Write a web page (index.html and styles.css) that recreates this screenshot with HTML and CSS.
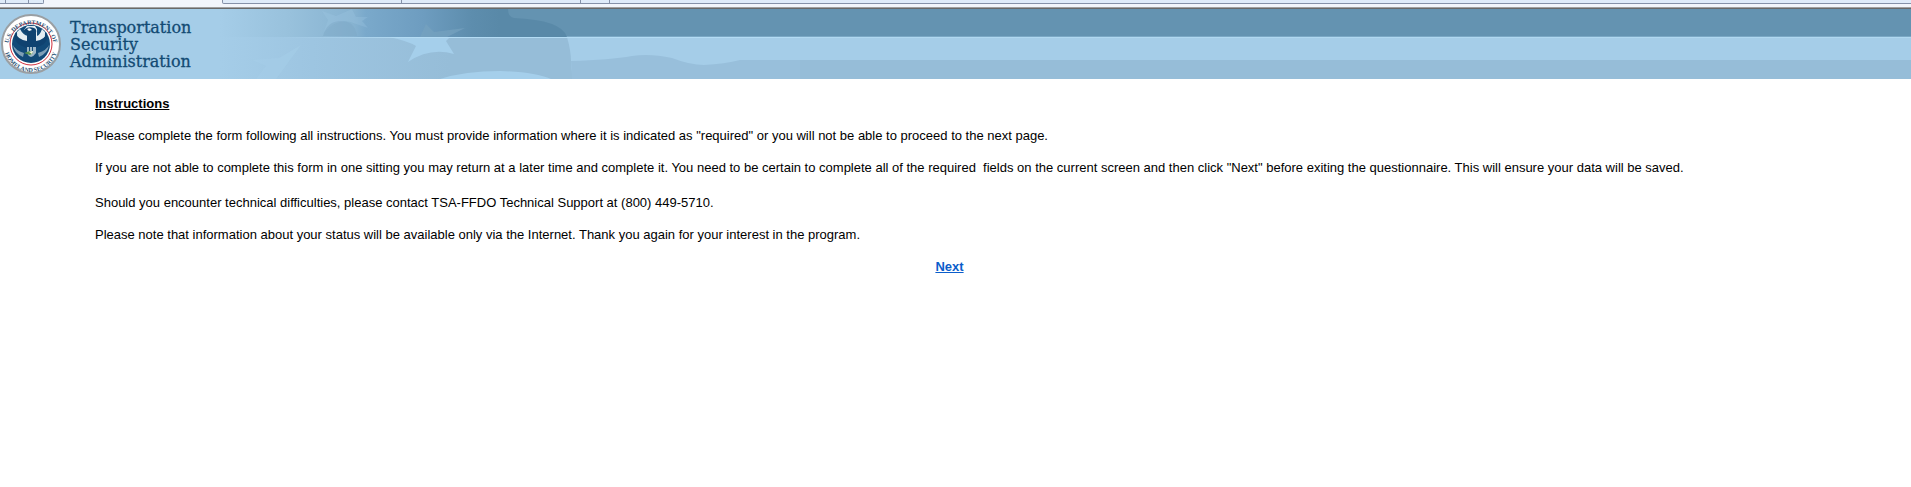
FILE: index.html
```html
<!DOCTYPE html>
<html lang="en">
<head>
    <meta charset="UTF-8">
    <meta name="viewport" content="width=device-width, initial-scale=1.0">
    <title>Transportation Security Administration</title>
    <link rel="stylesheet" href="styles.css">
</head>
<body>
<div class="tab-strip">
    <span class="tab tab-tiny"></span>
    <span class="tab tab-small"></span>
    <span class="tab tab-end"></span>
    <span class="tab-active"></span>
    <span class="tab tab-start"></span>
    <span class="tab tab-wide"></span>
    <span class="tab tab-new"></span>
    <span class="tab-rest"></span>
</div>

<header class="banner">
    <!-- flag artwork behind the logo -->
    <svg class="flag" width="800" height="70" viewBox="0 0 800 70" aria-hidden="true">
        <defs>
            <linearGradient id="top" gradientUnits="userSpaceOnUse" x1="220" y1="0" x2="500" y2="0">
                <stop offset="0" stop-color="#a5cde8"/>
                <stop offset="0.25" stop-color="#98c1dc"/>
                <stop offset="0.48" stop-color="#86b2d0"/>
                <stop offset="0.52" stop-color="#7aa9cb"/>
                <stop offset="0.72" stop-color="#6e9dc0"/>
                <stop offset="0.9" stop-color="#5d8dad"/>
                <stop offset="1" stop-color="#5989a8"/>
            </linearGradient>
            <linearGradient id="low" gradientUnits="userSpaceOnUse" x1="220" y1="0" x2="450" y2="0">
                <stop offset="0" stop-color="#a5cde8"/>
                <stop offset="0.4" stop-color="#9dc5e1"/>
                <stop offset="1" stop-color="#96bdd8"/>
            </linearGradient>
            <linearGradient id="line" gradientUnits="userSpaceOnUse" x1="280" y1="0" x2="420" y2="0">
                <stop offset="0" stop-color="#b4dcf4" stop-opacity="0"/>
                <stop offset="1" stop-color="#b4dcf4"/>
            </linearGradient>
        </defs>
        <path fill="#a5cde8" d="M0 0h230v70H0zM560 29h180v41H560z"/>
        <path fill="url(#top)" d="M220 0H508Q508 8 514 9Q562 11 567 28H220z"/>
        <path fill="url(#low)" d="M220 28H567Q571 42 571 52Q571 62 574 70H220z"/>
        <path fill="#98bfdb" d="M571 52Q610 51 632 47Q650 44 672 49Q690 56 704 56Q725 55 740 51H800V70H572z"/>
        <path fill="#a5cfeb" d="M440 70Q465 62 500 62Q535 63 551 70z"/>
        <path fill="#a5cde8" opacity=".25" d="M322 2l14 5 16-7 4 8h12l-6 4 6 7-12-4q-16-8-32 8l4-12z"/>
        <path fill="#a5cde8" opacity=".6" d="M301 36l-22 13-27 2 14 6-10 13h20z"/>
        <path fill="#7ba5c3" opacity=".4" d="M323 27q4-15 18-15t16 15z"/>
        <path fill="#76a2bf" opacity=".7" d="M426 15l8 8 31-4-18 9h-27z"/>
        <path fill="#a5cfeb" d="M389 28Q408 32 416 37L408 53Q430 38 454 45L446 32 450 28z"/>
        <path fill="url(#line)" d="M280 28h520v1H280z"/>
    </svg>
    <div class="logo">
        <svg class="seal" width="62" height="62" viewBox="0 0 62 62" role="img" aria-label="Homeland Security seal">
            <defs>
                <path id="arc-top" d="M9 41A23 23 0 1 1 53 41"/>
                <path id="arc-bottom" d="M4 32A27 27 0 0 0 58 32"/>
            </defs>
            <circle cx="31" cy="31" r="29" fill="#fff" stroke="#9a9fa3" stroke-width="2"/>
            <circle cx="31" cy="31" r="21" fill="#fff" stroke="#d0303e" stroke-width="1"/>
            <circle cx="31" cy="31" r="19" fill="#124a78"/>
            <!-- sky behind the wings -->
            <path fill="#e4edf3" d="M20 16Q23 22 28 23V19L24 17 27 13H35L37 16V23Q40 22 42 16L45 19Q46 29 38 33V31H25V33Q16 29 17 19z"/>
            <path fill="#0f4270" d="M15 19Q18 27 27 28V20L23 19 25 16Q29 13 34 15Q37 16 36 20V28Q45 27 47 19Q49 30 40 33L36 35H26L22 33Q13 30 15 19z"/>
            <path fill="#7f9fb6" d="M13 32q2 5 11 8l-1 4Q14 40 13 32zM49 32q-2 5-11 8l1 4q9-4 10-12z"/>
            <path fill="#fff" d="M27 16q3-2 5 1l-3 1z"/>
            <path fill="#9fb7c8" d="M27 34h9v6q-2 3-5 4-3-1-4-4z"/>
            <path fill="#124a78" d="M29 34h1v4h-1zM32 34h1v4h-1z"/>
            <path fill="#58924f" d="M24 40l6-2 3 2-3 2z"/>
            <path fill="#f3f2d8" d="M29 39l4-1-1 3z"/>
            <text class="seal-text"><textPath href="#arc-top" startOffset="50%" text-anchor="middle">U.S. DEPARTMENT OF</textPath></text>
            <text class="seal-text"><textPath href="#arc-bottom" startOffset="50%" text-anchor="middle">HOMELAND SECURITY</textPath></text>
        </svg>
        <div class="agency">Transportation<br>Security<br>Administration</div>
    </div>
</header>

<main class="content">
    <h1>Instructions</h1>
    <p>Please complete the form following all instructions. You must provide information where it is indicated as "required" or you will not be able to proceed to the next page.</p>
    <p class="saving">If you are not able to complete this form in one sitting you may return at a later time and complete it. You need to be certain to complete all of the required&nbsp; fields on the current screen and then click "Next" before exiting the questionnaire. This will ensure your data will be saved.</p>
    <p>Should you encounter technical difficulties, please contact TSA-FFDO Technical Support at (800) 449-5710.</p>
    <p>Please note that information about your status will be available only via the Internet. Thank you again for your interest in the program.</p>
    <div class="actions"><a href="#">Next</a></div>
</main>
</body>
</html>
```
FILE: styles.css
```css
body {
    margin: 0;
    background-color: #fff;
    color: #000;
    font-family: "Liberation Sans", Arial, sans-serif;
    font-size: 13px;
    line-height: 16px;
}

.tab-strip {
    display: flex;
    height: 7px;
    background-color: #f2f5fb;
    border-bottom: 1px solid #a0a0a0;
    box-shadow: 0 1px 0 #696969;
    margin-bottom: 1px;
}

.tab,
.tab-rest {
    box-sizing: border-box;
    height: 4px;
    background-color: #dfebf9;
    border-bottom: 1px solid #8591a8;
}

.tab {
    border-right: 1px solid #8591a8;
}

.tab-tiny {
    width: 6px;
}

.tab-small {
    width: 23px;
}

.tab-end {
    width: 15px;
    border-bottom-right-radius: 2px;
}

.tab-active {
    width: 178px;
}

.tab-start {
    width: 180px;
    border-left: 1px solid #8591a8;
    border-bottom-left-radius: 2px;
}

.tab-wide {
    width: 179px;
}

.tab-new {
    width: 29px;
}

.tab-rest {
    flex: 1;
}

.banner {
    position: relative;
    height: 70px;
    background: linear-gradient(#6493b1 27px, #7ba8c5 27px, #7ba8c5 28px, #b0d8f0 28px, #b0d8f0 29px, #a5cde8 29px, #a5cde8 51px, #96bdd8 51px);
}

/* artwork sits under the logo */
.flag {
    position: absolute;
    top: 0;
    left: 0;
}

.logo {
    position: relative;
    display: flex;
    align-items: flex-start;
    gap: 8px;
    padding-top: 4px;
}

.seal-text {
    fill: #2c5578;
    font-family: "Liberation Serif", serif;
    font-size: 6px;
    font-weight: bold;
}

.agency {
    padding-top: 6px;
    color: #124a73;
    font-family: "DejaVu Serif", serif;
    font-size: 16px;
    line-height: 17px;
    -webkit-text-stroke: 0.3px #124a73;
}

.content {
    padding: 17px 107px 0 95px;
}

h1 {
    margin: 0 0 16px;
    font-size: 13px;
    line-height: 16px;
    text-decoration: underline;
}

p {
    margin: 0 0 16px;
}

.saving {
    margin-bottom: 19px;
}

.actions {
    text-align: center;
}

.actions a {
    color: #0b5ecb;
    font-size: 13px;
    font-weight: bold;
}
```
